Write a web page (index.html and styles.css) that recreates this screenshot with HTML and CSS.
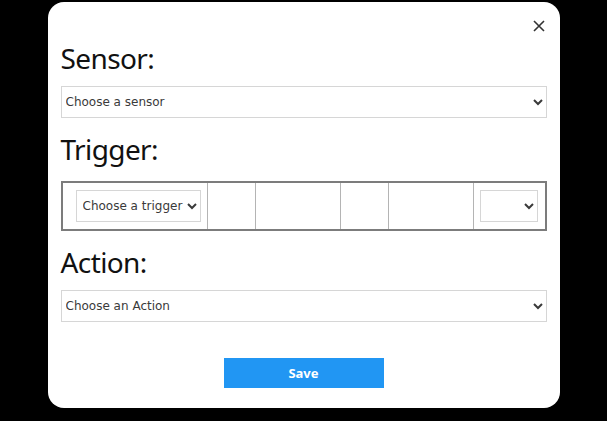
FILE: index.html
```html
<!DOCTYPE html>
<html>
<head>
<meta charset="utf-8">
<link rel="stylesheet" href="styles.css">
</head>
<body>
<div class="modal">
  <div class="modal-top">
    <button class="close" aria-label="Close">
      <svg width="12" height="12" viewBox="0 0 12 12"><path d="M1 1 L11 11 M11 1 L1 11" stroke="#333" stroke-width="1.6" fill="none"/></svg>
    </button>
  </div>
  <h2 class="label first">Sensor:</h2>
  <select class="field"><option>Choose a sensor</option></select>
  <h2 class="label trig-label">Trigger:</h2>
  <table class="trigger">
    <tr>
      <td class="c1"><select class="small trig"><option>Choose a trigger</option></select></td>
      <td class="c2"></td>
      <td class="c3"></td>
      <td class="c2"></td>
      <td class="c3"></td>
      <td class="c6"><select class="small op"><option></option></select></td>
    </tr>
  </table>
  <h2 class="label">Action:</h2>
  <select class="field"><option>Choose an Action</option></select>
  <div class="actions">
    <button class="save">Save</button>
  </div>
</div>
</body>
</html>
```

FILE: styles.css
```css
html, body {
  margin: 0;
  background: #000;
}
body {
  padding-top: 2px;
  font-family: "Noto Sans", "DejaVu Sans", sans-serif;
}
.modal {
  width: 512px;
  box-sizing: border-box;
  margin: 0 auto;
  background: #fff;
  border-radius: 16px;
  padding: 12px 13px 20px;
  height: 406px;
}
.modal-top {
  display: flex;
  justify-content: flex-end;
  height: 24px;
}
.close {
  border: 0;
  background: none;
  padding: 0;
  width: 24px;
  height: 24px;
  display: flex;
  align-items: center;
  justify-content: center;
  margin-right: -4px;
  cursor: pointer;
}
.label {
  font-family: "Noto Sans", sans-serif;
  font-weight: 400;
  font-size: 28px;
  line-height: 34px;
  letter-spacing: -0.6px;
  color: #111;
  margin: 14px 0 11px;
}
.label.first {
  margin-top: 3px;
}
.label.trig-label {
  margin-bottom: 15px;
}
select {
  font-family: "DejaVu Sans", Verdana, sans-serif;
  font-size: 12px;
  color: #3a3a3a;
  background: #fff;
  border: 1px solid #d6d6d6;
  border-radius: 0;
  height: 32px;
  box-sizing: border-box;
  padding: 0;
}
.field {
  display: block;
  width: 100%;
}
.trigger {
  width: 100%;
  border-collapse: collapse;
  border: 2px solid #7c7c7c;
}
.trigger td {
  border: 1px solid #b4b4b4;
  height: 48px;
  padding: 0;
  box-sizing: border-box;
}
.trigger .c1 { width: 146px; padding-left: 13px; }
.trigger .c2 { width: 48px; }
.trigger .c3 { width: 85px; }
.trigger .c6 { padding-left: 6px; }
.trig {
  width: 125px;
  padding-left: 2px;
}
.op {
  width: 58px;
}
.actions {
  display: flex;
  justify-content: center;
  margin-top: 36px;
}
.save {
  width: 160px;
  height: 30px;
  border: 0;
  background: #2196f3;
  color: #fff;
  font-family: "Noto Sans", sans-serif;
  font-weight: 700;
  font-size: 13px;
  cursor: pointer;
}
```
